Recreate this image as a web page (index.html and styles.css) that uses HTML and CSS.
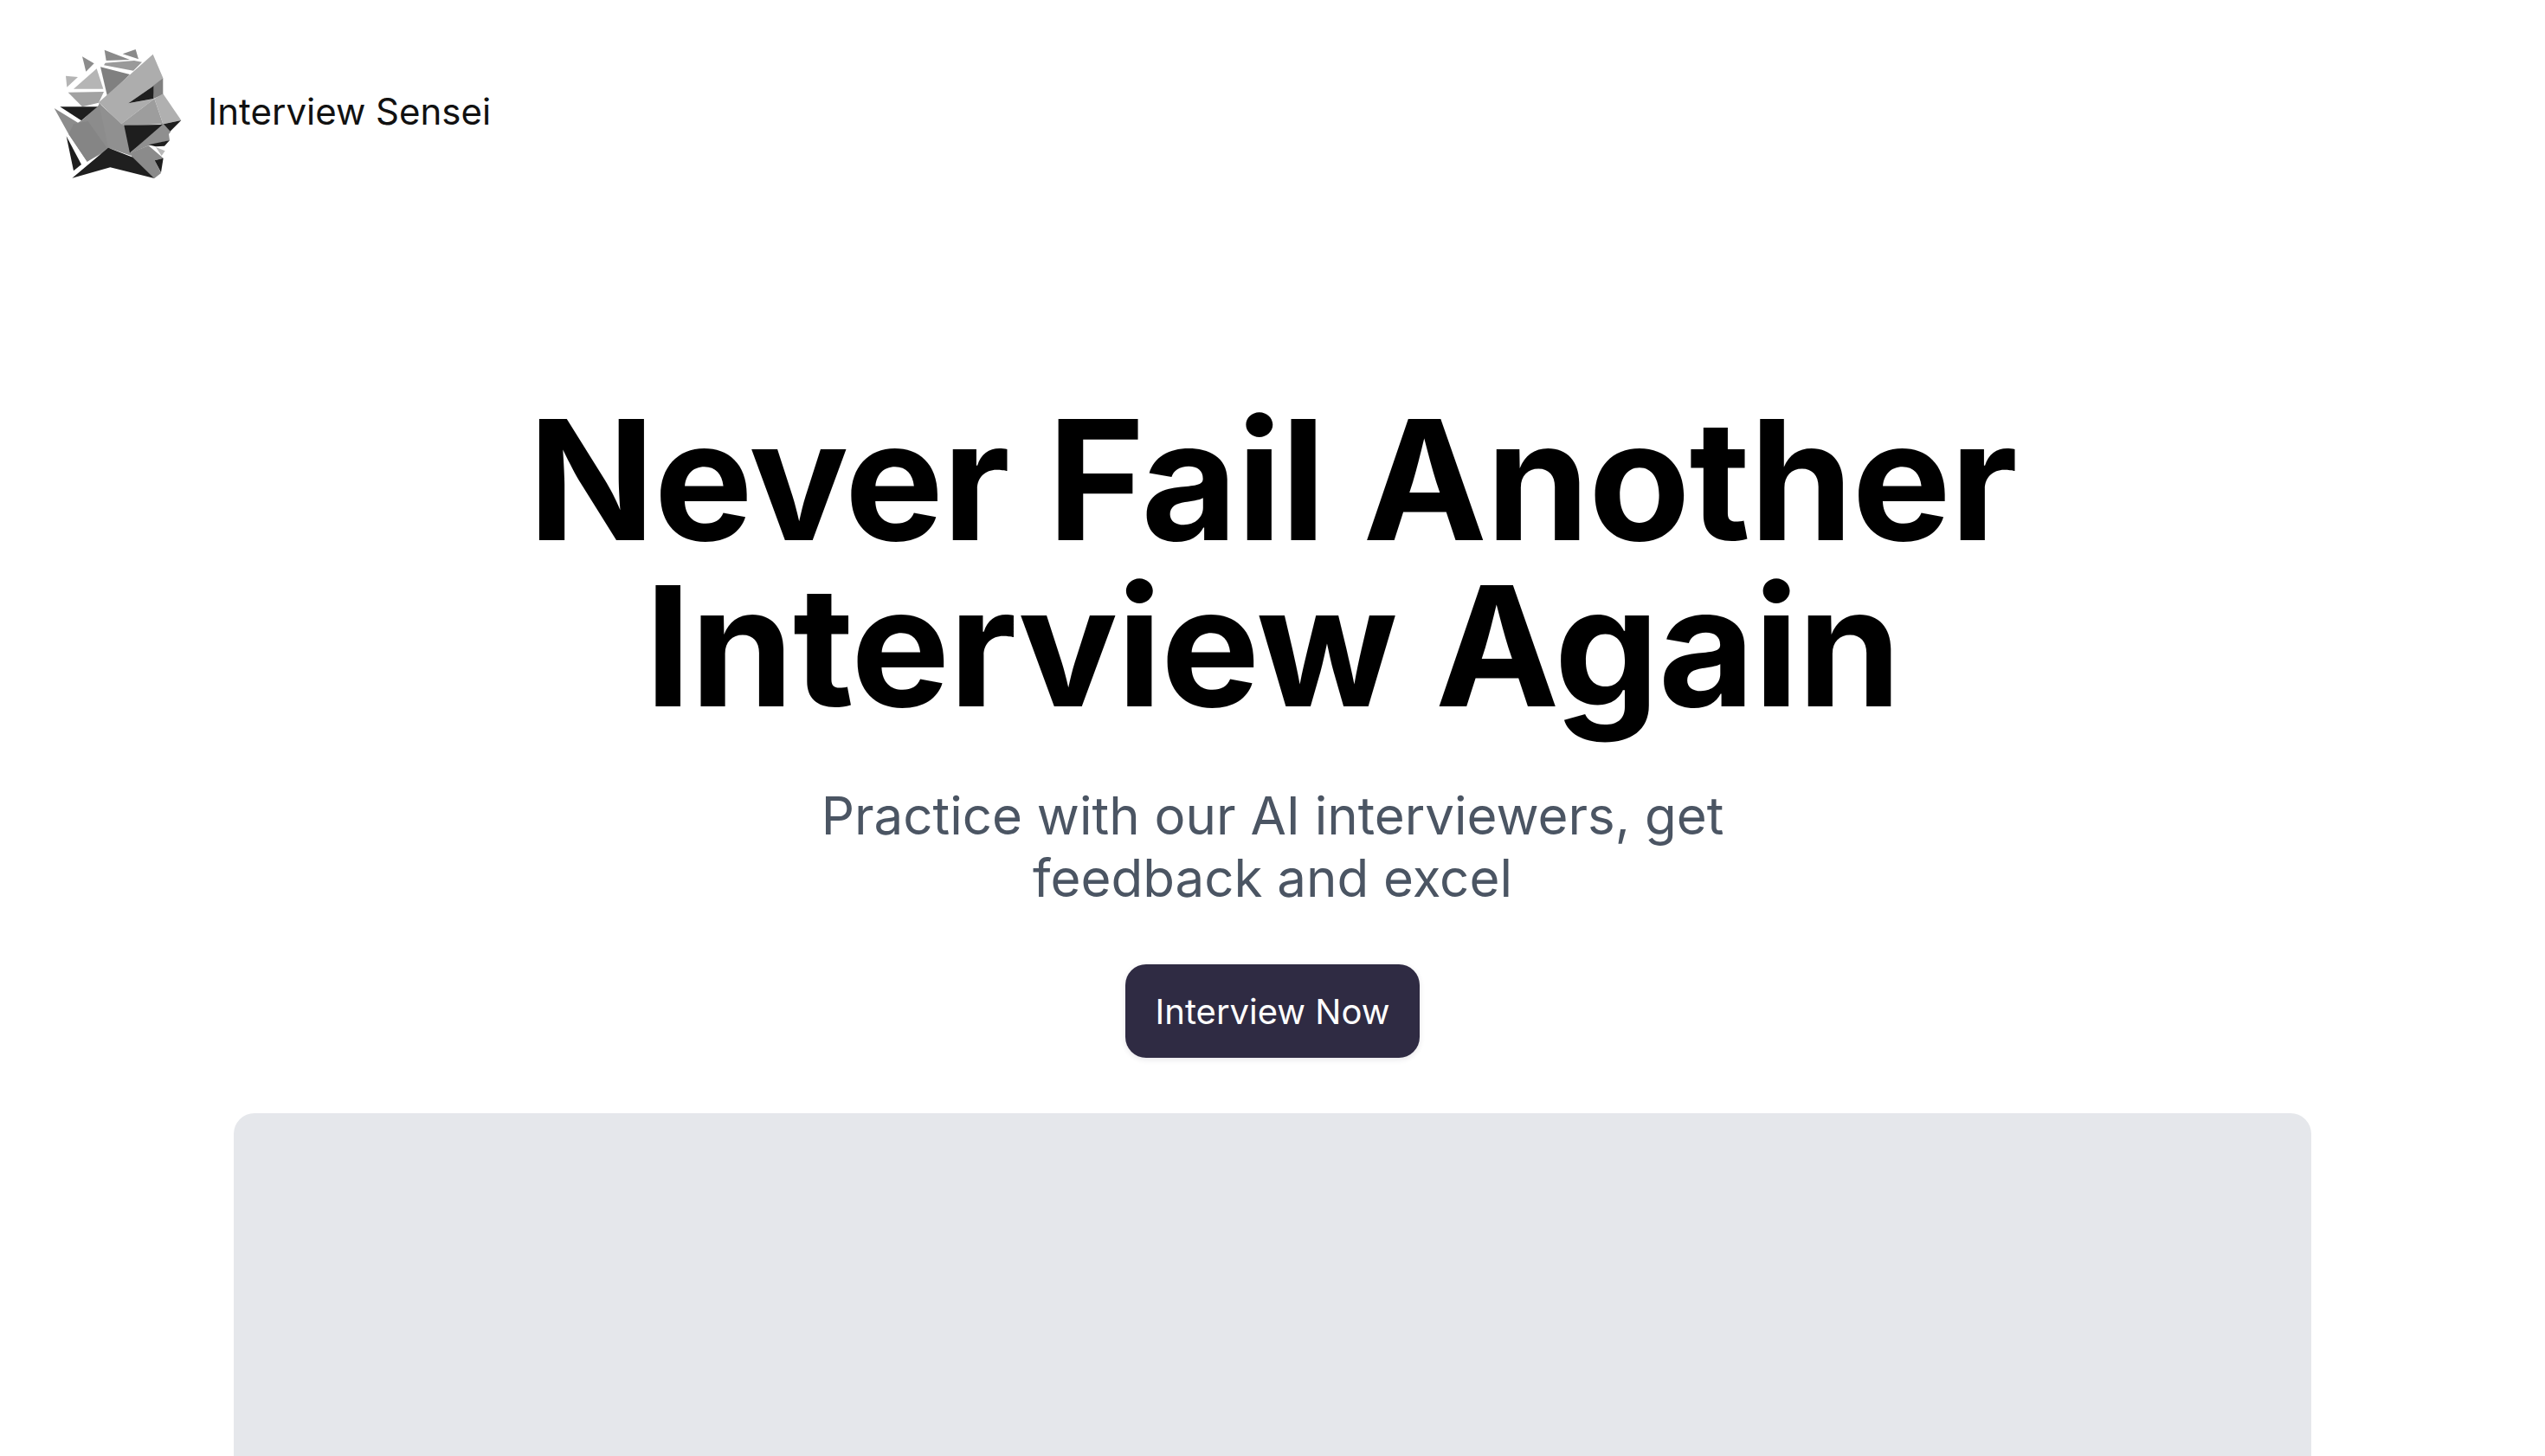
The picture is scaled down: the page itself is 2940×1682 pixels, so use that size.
FILE: index.html
```html
<!DOCTYPE html>
<html lang="en">
<head>
<meta charset="utf-8">
<title>Interview Sensei</title>
<link rel="stylesheet" href="styles.css">
</head>
<body>
<header class="header">
  <svg class="logo" viewBox="0 0 600 570" aria-hidden="true">
    <polygon fill="#8a8a8a" points="242,53 330,87 248,90"/>
    <polygon fill="#8a8a8a" points="305,67 350,51 360,85"/>
    <polygon fill="#8c8c8c" points="165,76 206,100 178,128"/>
    <polygon fill="#b4b4b4" points="108,143 150,147 112,182"/>
    <polygon fill="#b5b5b5" points="135,188 215,118 238,188"/>
    <polygon fill="#9a9a9a" points="245,98 345,90 372,95 342,125 240,106"/>
    <polygon fill="#808080" points="228,112 330,138 252,214"/>
    <polygon fill="#a2a2a2" points="116,200 240,198 222,236 165,250"/>
    <polygon fill="#8c8c8c" points="68,255 150,305 165,296 218,248 228,238 262,395 182,440 118,345"/>
    <polygon fill="#858585" points="135,310 185,300 250,392 182,440 118,345"/>
    <polygon fill="#909090" points="222,236 300,308 318,320 335,420 255,392"/>
    <polygon fill="#adadad" points="222,235 410,68 445,150 412,178 325,238 415,222 300,310"/>
    <polygon fill="#808080" points="410,178 445,150 445,208 412,222"/>
    <polygon fill="#1f1f1f" points="325,238 412,178 412,222"/>
    <polygon fill="#9d9d9d" points="300,310 415,222 445,310 310,316"/>
    <polygon fill="#b0b0b0" points="415,222 445,205 508,297 445,310"/>
    <polygon fill="#8f8f8f" points="440,308 450,310 472,336 465,345 468,366 395,385 330,412"/>
    <polygon fill="#1e1e1e" points="88,250 218,250 162,298"/>
    <polygon fill="#1e1e1e" points="310,314 443,312 330,410"/>
    <polygon fill="#1e1e1e" points="447,310 508,297 470,335"/>
    <polygon fill="#1e1e1e" points="395,382 468,366 450,386 420,388"/>
    <polygon fill="#b8b8b8" points="420,390 452,403 440,420"/>
    <polygon fill="#8b8b8b" points="330,410 395,385 446,428 416,436 438,480 415,498 338,425"/>
    <polygon fill="#1e1e1e" points="416,436 446,428 438,478"/>
    <polygon fill="#1e1e1e" points="110,352 162,450 135,472"/>
    <polygon fill="#1f1f1f" points="130,497 255,392 340,425 415,498 262,460"/>
  </svg>
  <span class="brand">Interview Sensei</span>
</header>
<main class="hero">
  <h1 class="title">Never Fail Another<br>Interview Again</h1>
  <p class="subtitle">Practice with our AI interviewers, get<br>feedback and excel</p>
  <a class="cta" href="#">Interview Now</a>
  <div class="preview"></div>
</main>
</body>
</html>
```
FILE: styles.css
```css
html, body {
  margin: 0;
  height: 100%;
  overflow: hidden;
  background: #fff;
}
body {
  font-family: Inter, "Liberation Sans", sans-serif;
}
.header {
  display: flex;
  align-items: center;
  padding: 40px 0 0 40px;
  height: 190px;
}
.logo {
  width: 200px;
  height: 190px;
  flex: none;
  filter: blur(0.4px);
}
.brand {
  margin: 0 0 14px 0;
  font-size: 42px;
  color: #111;
}
.hero {
  display: flex;
  flex-direction: column;
  align-items: center;
  padding-top: 228px;
}
.title {
  margin: 0;
  font-size: 192px;
  line-height: 192px;
  font-weight: 700;
  letter-spacing: -1.2px;
  color: #000;
  text-align: center;
}
.subtitle {
  margin: 64px 0 0;
  font-size: 60px;
  line-height: 72px;
  color: #4b5563;
  text-align: center;
}
.cta {
  margin-top: 64px;
  width: 340px;
  height: 108px;
  border-radius: 24px;
  background: #2f2b43;
  color: #fff;
  font-size: 40px;
  display: flex;
  align-items: center;
  justify-content: center;
  text-decoration: none;
  box-shadow: 0 2px 6px rgba(47, 43, 67, 0.12);
}
.preview {
  margin-top: 64px;
  width: 2400px;
  height: 600px;
  border-radius: 24px;
  background: #e5e7eb;
  flex: none;
}
```
